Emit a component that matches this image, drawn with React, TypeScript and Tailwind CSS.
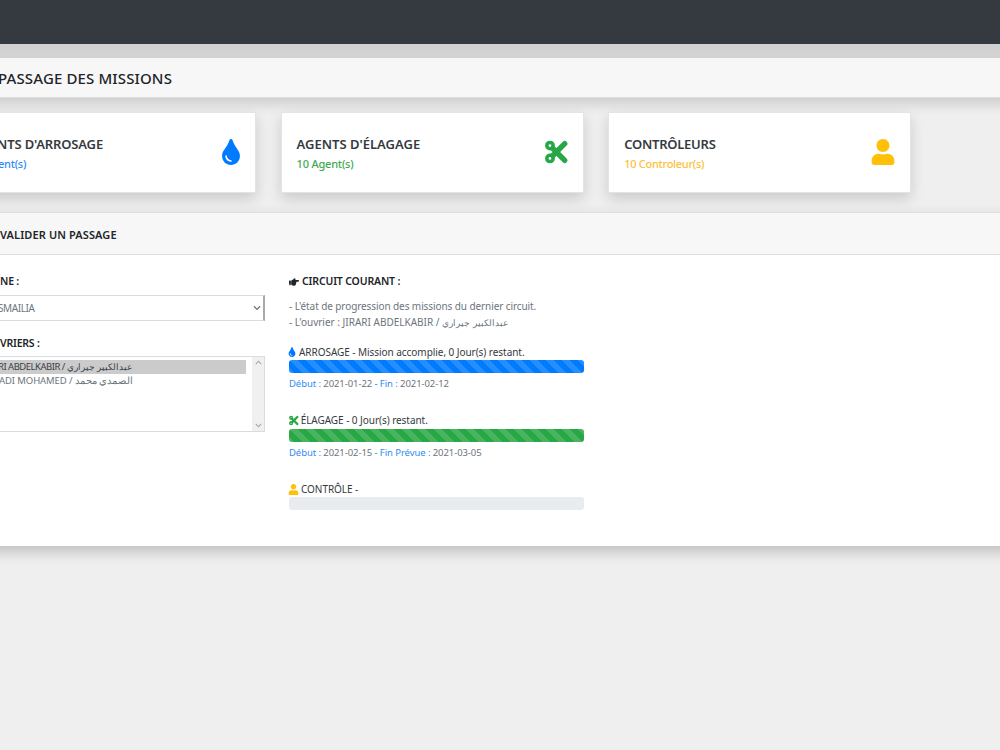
import React from 'react';
import { FaTint, FaUser, FaHandPointRight, FaChevronDown, FaChevronUp } from 'react-icons/fa';

interface StatCardProps {
  title: string;
  count: string;
  titleClass: string;
  countClass: string;
  children: React.ReactNode;
}

const Scissors = ({ className }: { className: string }) => (
  <svg viewBox="0 0 448 512" className={className} fill="none" stroke="currentColor">
    <circle cx="98" cy="130" r="62" strokeWidth="70" />
    <circle cx="98" cy="382" r="62" strokeWidth="70" />
    <path d="M160 192L388 420M160 320L388 92" strokeWidth="106" strokeLinecap="round" />
  </svg>
);

const StatCard: React.FC<StatCardProps> = ({ title, count, titleClass, countClass, children }) => (
  <div className="w-[303px] h-[81px] shrink-0 bg-white border border-[#e4e4e4] shadow-[0_6px_13px_rgba(0,0,0,0.15)] pl-[15px] pr-[15px] flex items-center justify-between">
    <div className="whitespace-nowrap pt-[2px]">
      <div className={`text-[13px] leading-[19px] font-semibold text-[#343a40] ${titleClass}`}>{title}</div>
      <div className={`text-[11px] leading-[19px] font-medium ${countClass}`}>{count}</div>
    </div>
    {children}
  </div>
);

interface MissionProps {
  icon: React.ReactNode;
  label: string;
  barClass: string;
  children?: React.ReactNode;
}

const STRIPES =
  'bg-[linear-gradient(45deg,rgba(255,255,255,.15)_25%,transparent_25%,transparent_50%,rgba(255,255,255,.15)_50%,rgba(255,255,255,.15)_75%,transparent_75%,transparent)] bg-[length:16px_16px]';

const Mission: React.FC<MissionProps> = ({ icon, label, barClass, children }) => (
  <div className="h-[68.7px] whitespace-nowrap">
    <div className="h-4 flex items-center text-[10px] tracking-[-0.05px] text-[#343a40]">
      {icon}
      <span>{label}</span>
    </div>
    <div className={`h-[13px] w-[295px] rounded-[3px] ${barClass}`} />
    <div className="mt-[3px] h-4 flex items-center text-[9.5px] tracking-[-0.08px] text-[#6c757d]">{children}</div>
  </div>
);

export default function App() {
  return (
    <div className="w-[1000px] h-[750px] overflow-hidden bg-[#efefef] font-['Noto_Sans','Open_Sans',sans-serif] text-[#212529]">
      <div className="h-[44px] bg-[#343a40]" />
      <div className="h-[14px] bg-[linear-gradient(#cfcfcf,#d7d7d7)]" />

      {/* Page title */}
      <div className="-mx-5 px-5 h-[40px] bg-[#f7f7f7] border-b border-[#dfdfdf] shadow-[0_6px_13px_rgba(0,0,0,0.15)] flex items-center whitespace-nowrap">
        <h1 className="-ml-[2px] pt-[2px] text-[15px] font-medium tracking-[0.13px]">PASSAGE DES MISSIONS</h1>
      </div>

      {/* Counters */}
      <div className="mt-[14px] -ml-[47px] flex gap-[24.6px]">
        <StatCard title="NTS D'ARROSAGE" count="ent(s)" titleClass="pl-[28px] tracking-[-0.15px]" countClass="pl-[29px] tracking-[-0.25px] text-[#2f8bf5]">
          <FaTint className="text-[26px] text-[#007bff] -mr-[4px] -mt-[2px]" />
        </StatCard>
        <StatCard title="AGENTS D'ÉLAGAGE" count="10 Agent(s)" titleClass="tracking-[0px]" countClass="tracking-[-0.2px] text-[#3fa954]">
          <Scissors className="h-[26px] text-[#28a745] -mt-[2px]" />
        </StatCard>
        <StatCard title="CONTRÔLEURS" count="10 Controleur(s)" titleClass="tracking-[-0.25px]" countClass="tracking-[-0.28px] text-[#fdc03a]">
          <FaUser className="text-[26px] text-[#ffc107] -mr-[1px] -mt-[2px]" />
        </StatCard>
      </div>

      <div className="-mx-5 px-5 mt-[19px] h-[334px] bg-white shadow-[0_6px_13px_rgba(0,0,0,0.2)]">
        <div className="-mx-5 px-5 h-[43px] bg-[#f7f7f7] border-t border-b border-[#dfdfdf] flex items-center">
          <h2 className="pt-[3px] text-[11px] font-semibold tracking-[0.1px] whitespace-nowrap">VALIDER UN PASSAGE</h2>
        </div>

        <div className="flex">
          {/* Zone and worker pickers */}
          <div className="w-[265px] pt-[18px] text-[9.5px] whitespace-nowrap">
            <div className="h-4 leading-4 font-semibold text-[10.5px] tracking-[-0.2px]">NE :</div>
            <div className="mt-[6px] h-[26px] border border-l-0 border-[#d9dce0] border-r-2 border-r-[#a9a9ad] flex items-center justify-between text-[#6c757d]">
              <span className="-ml-[2px] text-[10px] tracking-[-0.4px]">SMAILIA</span>
              <FaChevronDown className="text-[8px] mr-[2px]" />
            </div>
            <div className="mt-[14px] h-4 leading-4 font-semibold text-[10.5px] tracking-[-0.2px]">VRIERS :</div>
            <div className="mt-[5px] h-[76px] border border-l-0 border-[#d9dce0] flex">
              <div className="grow pt-[3px] pr-[6px]">
                <div className="h-[14px] leading-[14px] bg-[#cbcbcb] text-[#3c4147] tracking-[-0.5px]">
                  <span className="-ml-[2px]">RI ABDELKABIR / <span className="text-[8.6px] tracking-normal">عبدالكبير جيراري</span></span>
                </div>
                <div className="h-[14px] leading-[14px] text-[#6c757d] tracking-[-0.1px]">
                  <span className="-ml-[1px]">ADI MOHAMED / <span className="text-[9.6px] tracking-normal">الصمدي محمد</span></span>
                </div>
              </div>
              <div className="w-[12px] bg-[#f0f0f0] flex flex-col items-center justify-between py-[2px] text-[7px] text-[#a6a6a6]">
                <FaChevronUp />
                <FaChevronDown />
              </div>
            </div>
          </div>

          {/* Current circuit */}
          <div className="ml-6 pt-[18px] w-[295px] whitespace-nowrap">
            <div className="h-4 pt-px flex items-center text-[10.5px] tracking-[-0.15px] font-semibold">
              <FaHandPointRight className="text-[10px] mr-[3px]" />
              <span>CIRCUIT COURANT :</span>
            </div>
            <div className="mt-[10px] mb-[14px] text-[10px] leading-[15.5px] text-[#6c757d]">
              <p className="tracking-[-0.09px]">- L'état de progression des missions du dernier circuit.</p>
              <p>- L'ouvrier : JIRARI ABDELKABIR / <span className="text-[9.4px]">عبدالكبير جيراري</span></p>
            </div>

            <Mission
              icon={<FaTint className="text-[10px] text-[#007bff] -ml-[2px] mr-[2px]" />}
              label="ARROSAGE - Mission accomplie, 0 Jour(s) restant."
              barClass={`bg-[#007bff] ${STRIPES}`}
            >
              <span><span className="text-[#2f8bf5]">Début :</span> 2021-01-22 <span className="text-[#007bff]">-</span> <span className="text-[#2f8bf5]">Fin :</span> 2021-02-12</span>
            </Mission>
            <Mission
              icon={<Scissors className="h-[11px] text-[#28a745] mr-[2px]" />}
              label="ÉLAGAGE - 0 Jour(s) restant."
              barClass={`bg-[#28a745] ${STRIPES}`}
            >
              <span><span className="text-[#2f8bf5]">Début :</span> 2021-02-15 <span className="text-[#28a745]">-</span> <span className="text-[#2f8bf5]">Fin Prévue :</span> 2021-03-05</span>
            </Mission>
            <Mission
              icon={<FaUser className="text-[11px] text-[#ffc107] -ml-px mr-[2px]" />}
              label="CONTRÔLE -"
              barClass="bg-[#e9ecef]"
            />
          </div>
        </div>
      </div>
    </div>
  );
}
